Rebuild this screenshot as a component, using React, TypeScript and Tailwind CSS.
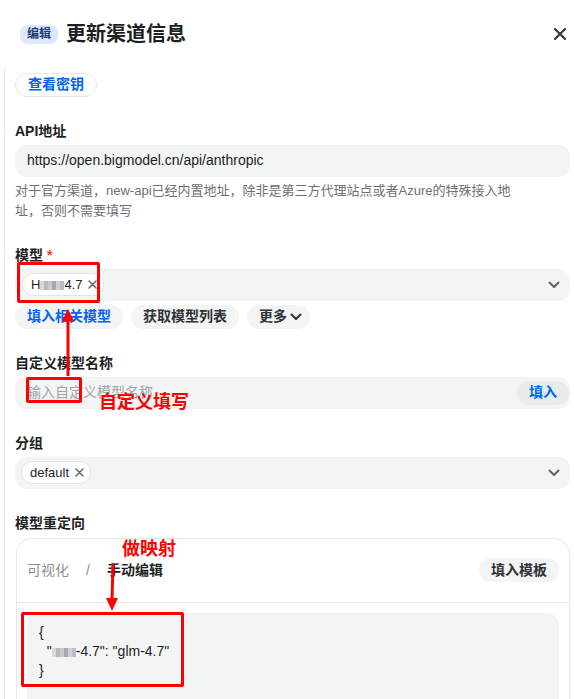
const font = { fontFamily: '"Liberation Sans", "Noto Sans CJK SC", sans-serif' };

function Chevron({ className = '' }: { className?: string }) {
  return (
    <svg width="12" height="8" viewBox="0 0 12 8" className={className}>
      <polyline points="1.5,1.5 6,6 10.5,1.5" fill="none" stroke="currentColor" strokeWidth="2" strokeLinecap="round" strokeLinejoin="round" />
    </svg>
  );
}

function SmallX() {
  return (
    <svg width="9" height="9" viewBox="0 0 9 9" className="text-[#666a70]">
      <path d="M1 1 L8 8 M8 1 L1 8" stroke="currentColor" strokeWidth="1.5" strokeLinecap="round" />
    </svg>
  );
}

// pixelated blur over a model name
function Mosaic() {
  const cells = ['bg-[#d9d9dd]', 'bg-[#b9b9c0]', 'bg-[#c9c9ce]', 'bg-[#a9a9b1]', 'bg-[#cfcfd4]', 'bg-[#bcbcc3]'];
  return (
    <span className="inline-flex h-[9px] align-[-1px]">
      {cells.map((c, i) => (
        <span key={i} className={`h-full w-[4px] ${c}`} />
      ))}
    </span>
  );
}

function Label({ children, required }: { children: React.ReactNode; required?: boolean }) {
  return (
    <div className="mt-6 mb-1 text-[14px] leading-5 font-semibold text-[#1c1f23]">
      {children}
      {required && <span className="ml-1 text-[#f93920]">*</span>}
    </div>
  );
}

function Tag({ children }: { children: React.ReactNode }) {
  return (
    <span className="flex h-[23px] items-center gap-[6px] rounded-full border border-[#e3e4e6] bg-white pl-2 pr-[6px] text-[13px] text-[#1c1f23]">
      {children}
      <SmallX />
    </span>
  );
}

export default function App() {
  return (
    <div className="relative h-[699px] w-[574px] overflow-hidden bg-white" style={font}>
      <header className="flex h-[68px] items-center justify-between pl-5 pr-2">
        <div className="flex items-center gap-2">
          <span className="flex h-[19px] items-center rounded-lg bg-[#dbe8fd] px-[7px] text-[12px] font-semibold text-[#1d3a76]">编辑</span>
          <h1 className="text-[20px] leading-7 font-bold text-[#1c1f23]">更新渠道信息</h1>
        </div>
        <svg width="12" height="12" viewBox="0 0 12 12" className="text-[#333]">
          <path d="M1 1 L11 11 M11 1 L1 11" stroke="currentColor" strokeWidth="2" strokeLinecap="round" />
        </svg>
      </header>

      <div className="ml-1 border-l border-[#e6e7e9] pr-1 pl-[10px] pt-1">
        <button className="h-6 rounded-full border border-[#e6e7e9] px-3 text-[14px] font-semibold text-[#0064fa]">查看密钥</button>

        <Label>API地址</Label>
        <div className="flex h-8 items-center rounded-xl bg-[#f3f4f4] px-3 text-[14px] text-[#1c1f23]">
          https://open.bigmodel.cn/api/anthropic
        </div>
        <p className="mt-1 text-[13px] leading-5 text-[#6b6f76]">
          对于官方渠道，new-api已经内置地址，除非是第三方代理站点或者Azure的特殊接入地
          <br />
          址，否则不需要填写
        </p>

        <Label required>模型</Label>
        <div className="flex h-8 items-center justify-between rounded-xl bg-[#f3f4f4] pl-[7px] pr-[10px]">
          <Tag>
            <span>
              H<Mosaic />4.7
            </span>
          </Tag>
          <Chevron className="text-[#5f6368]" />
        </div>
        <div className="mt-1 flex gap-2">
          <button className="h-6 rounded-full bg-[#f3f4f4] px-3 text-[14px] font-semibold text-[#0064fa]">填入相关模型</button>
          <button className="h-6 rounded-full bg-[#f3f4f4] px-3 text-[14px] font-semibold text-[#2e3238]">获取模型列表</button>
          <button className="flex h-6 items-center gap-[3px] rounded-full bg-[#f3f4f4] pl-3 pr-2 text-[14px] font-semibold text-[#2e3238]">
            更多
            <Chevron className="text-[#2e3238]" />
          </button>
        </div>

        <Label>自定义模型名称</Label>
        <div className="flex h-8 items-center justify-between rounded-xl bg-[#f3f4f4] pl-3 pr-[1px]">
          <span className="text-[14px] text-[#a0a4aa]">输入自定义模型名称</span>
          <button className="h-6 rounded-full bg-[#e8eaeb] px-3 text-[14px] font-semibold text-[#0064fa]">填入</button>
        </div>

        <Label>分组</Label>
        <div className="flex h-8 items-center justify-between rounded-xl bg-[#f3f4f4] pl-[6px] pr-[10px]">
          <Tag>default</Tag>
          <Chevron className="text-[#5f6368]" />
        </div>

        <Label>模型重定向</Label>
        <div className="ml-px mt-[5px] rounded-2xl border border-[#e6e7e9]">
          <div className="flex h-16 items-center justify-between border-b border-[#e6e7e9] px-[10px]">
            <div className="flex items-center gap-[17px] text-[14px]">
              <span className="text-[#8b9098]">可视化</span>
              <span className="text-[#8b9098]">/</span>
              <span className="font-semibold text-[#1c1f23]">手动编辑</span>
            </div>
            <button className="h-6 rounded-full bg-[#f3f4f4] px-3 text-[14px] font-semibold text-[#2e3238]">填入模板</button>
          </div>
          <div className="px-[10px] pt-[10px]">
            <div className="h-[120px] rounded-xl bg-[#f3f4f4] pl-3 pt-[10px] text-[14px] leading-[19px] whitespace-pre text-[#1c1f23]">
              <div>{'{'}</div>
              <div>
                {'  "'}
                <Mosaic />
                {'-4.7": "glm-4.7"'}
              </div>
              <div>{'}'}</div>
            </div>
          </div>
        </div>
      </div>

      {/* red annotations */}
      <div className="absolute top-[262px] left-[17px] h-[41px] w-[83px] rounded-[2px] border-[3px] border-[#ff0000]" />
      <div className="absolute top-[377px] left-[26px] h-[26px] w-[56px] rounded-[2px] border-[3px] border-[#ff0000]" />
      <div className="absolute top-[612px] left-[21px] h-[75px] w-[163px] rounded-[2px] border-[3px] border-[#ff0000]" />
      <div className="absolute top-[391px] left-[99px] text-[18px] leading-[22px] font-bold text-[#ff0000]">自定义填写</div>
      <div className="absolute top-[538px] left-[122px] text-[18px] leading-[22px] font-bold text-[#ff0000]">做映射</div>
      <svg className="pointer-events-none absolute top-0 left-0" width="574" height="699">
        <line x1="68" y1="376" x2="68" y2="318" stroke="#ff0000" strokeWidth="3" />
        <polygon points="68,309 62,321 74,321" fill="#ff0000" />
        <line x1="113" y1="563" x2="112" y2="600" stroke="#ff0000" strokeWidth="3" />
        <polygon points="112,611 106,598 118,598" fill="#ff0000" />
      </svg>
    </div>
  );
}
